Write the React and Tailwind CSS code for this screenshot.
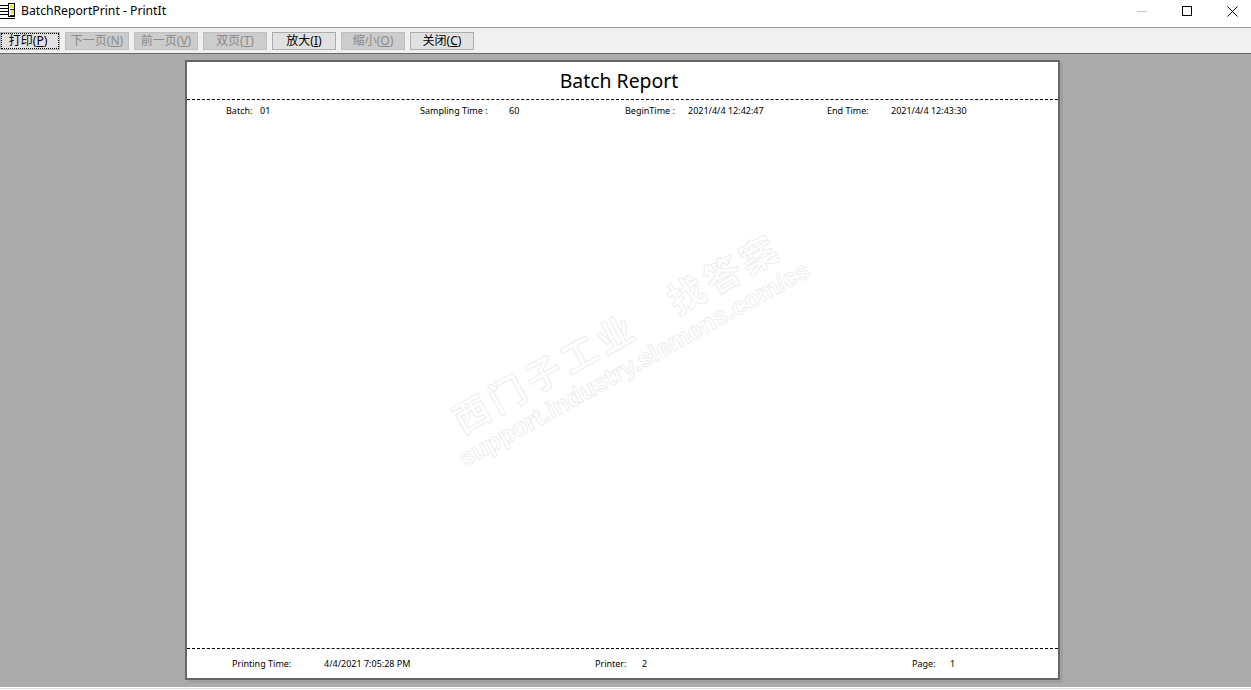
const toolbar = [
  { label: '打印', key: 'P', w: 'w-[60px]', focus: true },
  { label: '下一页', key: 'N', w: 'w-[64px]', off: true },
  { label: '前一页', key: 'V', w: 'w-[64px]', off: true },
  { label: '双页', key: 'T', w: 'w-[64px]', off: true },
  { label: '放大', key: 'I', w: 'w-[64px]' },
  { label: '缩小', key: 'O', w: 'w-[64px]', off: true },
  { label: '关闭', key: 'C', w: 'w-[64px]' },
];

function AppIcon() {
  return (
    <svg width="16" height="16" viewBox="0 0 16 16" className="shrink-0" shapeRendering="crispEdges">
      <path d="M0 2h8M0 5h8M0 8h8M0 11h8M0 15h15" stroke="#000" fill="none" />
      <rect x="8.5" y="0.5" width="6" height="13" fill="#fff" stroke="#000" />
      <rect x="10" y="2" width="4" height="3" fill="#f7e81d" />
      <rect x="11" y="7" width="3" height="4" fill="#f7e81d" />
      <path d="M10 6h4M10 12h4" stroke="#222" />
    </svg>
  );
}

function ToolButton({ label, hotkey, w, off, focus }) {
  return (
    <button
      type="button"
      className={`${w} h-[18px] flex items-center justify-center border text-[12px] leading-none ${
        off ? 'border-[#bfbfbf] bg-[#cccccc] text-[#8a8a8a]' : 'border-[#adadad] bg-[#e1e1e1] text-black'
      } ${focus ? 'outline-1 outline-dotted outline-black -outline-offset-2 pr-[4px]' : ''}`}
    >
      {label}(<span className="underline">{hotkey}</span>)
    </button>
  );
}

function Field({ className, children }) {
  return <span className={`whitespace-pre ${className}`}>{children}</span>;
}

export default function App() {
  return (
    <div className="flex h-[690px] w-[1251px] flex-col overflow-hidden bg-white font-['Noto_Sans','Noto_Sans_CJK_SC',sans-serif] text-black">
      <div className="flex h-[27px] shrink-0 items-center justify-between bg-white pb-[5px] pr-[13px]">
        <div className="flex items-center gap-[5px]">
          <AppIcon />
          <span className="text-[12.2px] leading-none">BatchReportPrint - PrintIt</span>
        </div>
        <div className="flex items-center gap-[35px]">
          <div className="h-px w-[10px] bg-[#c4c4c4]" />
          <div className="h-[10px] w-[10px] border border-black" />
          <svg width="11" height="11" viewBox="0 0 11 11">
            <path d="M0.5 0.5l10 10M10.5 0.5l-10 10" stroke="#000" fill="none" />
          </svg>
        </div>
      </div>

      <div className="flex h-[27px] shrink-0 items-center gap-[5px] border-y border-t-[#a0a0a0] border-b-[#696969] bg-[#f0f0f0] pt-[1px]">
        {toolbar.map((b) => (
          <ToolButton key={b.label} label={b.label} hotkey={b.key} w={b.w} off={b.off} focus={b.focus} />
        ))}
      </div>

      <div className="h-[633px] shrink-0 bg-[#ababab] pl-[185px] pt-[6px]">
        <div className="relative flex h-[620px] w-[875px] flex-col border-2 border-[#666666] bg-white shadow-[3px_3px_0_#a0a0a0]">
          <h1 className="h-[37px] pr-[7px] pt-[4px] text-center text-[19.4px] leading-[30px]">Batch Report</h1>
          <div className="border-t border-dashed border-black" />
          <div className="flex h-[20px] items-center text-[9px] leading-none">
            <Field className="flex w-[233px] pl-[39px]">
              <span className="w-[34px]">Batch:</span>
              01
            </Field>
            <Field className="flex w-[205px]">
              <span className="w-[89px]">Sampling Time :</span>
              60
            </Field>
            <Field className="flex w-[202px]">
              <span className="w-[63px]">BeginTime :</span>
              2021/4/4 12:42:47
            </Field>
            <Field className="flex">
              <span className="w-[64px]">End Time:</span>
              2021/4/4 12:43:30
            </Field>
          </div>
          <div className="flex-1" />
          <div className="border-t border-dashed border-black" />
          <div className="flex h-[29px] items-center text-[9px] leading-none">
            <Field className="flex w-[408px] pl-[45px]">
              <span className="w-[92px]">Printing Time:</span>
              4/4/2021 7:05:28 PM
            </Field>
            <Field className="flex w-[317px]">
              <span className="w-[47px]">Printer:</span>2
            </Field>
            <Field className="flex">
              <span className="w-[38px]">Page:</span>1
            </Field>
          </div>

          {/* site watermark, outlined and rotated over the page */}
          <div className="pointer-events-none absolute left-[437px] top-[284px] flex w-[400px] -translate-x-1/2 -translate-y-1/2 -rotate-[29deg] flex-col items-center whitespace-nowrap font-bold text-transparent">
            <span className="text-[36px] leading-[40px] tracking-[5px] [-webkit-text-stroke:1px_#eeeeee]">西门子工业　找答案</span>
            <span className="font-['Liberation_Sans',sans-serif] text-[25px] leading-[28px] [-webkit-text-stroke:1px_#eeeeee]">support.industry.siemens.com/cs</span>
          </div>
        </div>
      </div>

      <div className="flex-1 border-y border-white bg-[#dcdcdc]" />
    </div>
  );
}
